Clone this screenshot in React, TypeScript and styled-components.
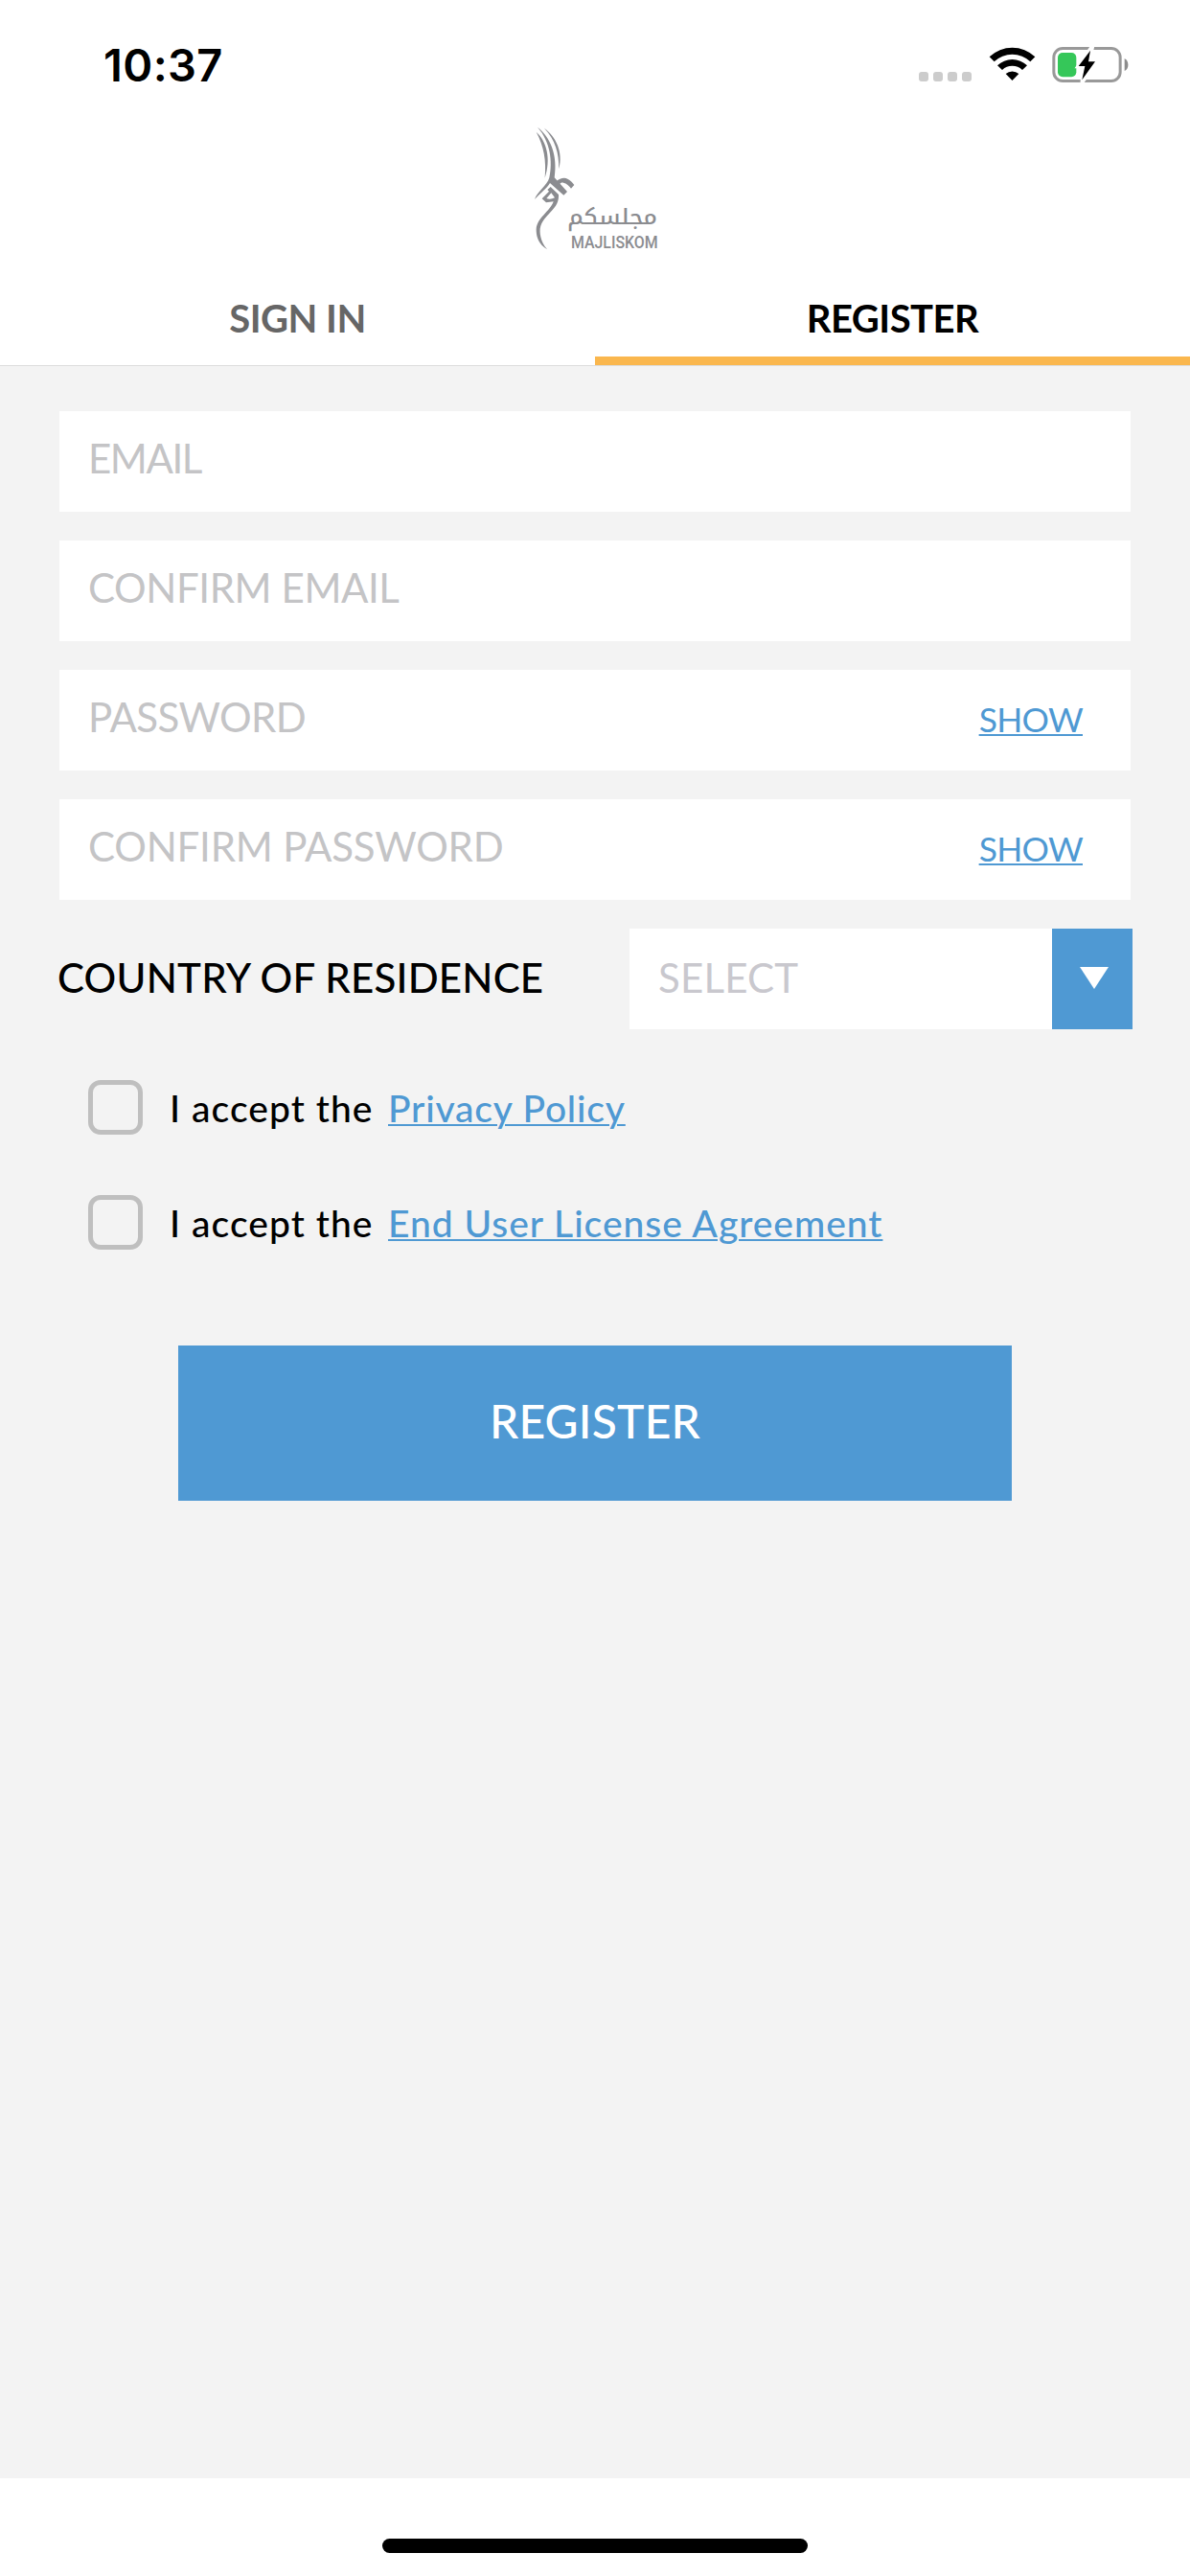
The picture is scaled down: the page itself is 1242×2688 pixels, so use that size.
import React, { useState } from 'react';
import styled, { createGlobalStyle } from 'styled-components';

const blue = '#4f99d3';
const surface = '#f3f3f3';

const GlobalStyle = createGlobalStyle`
  * { box-sizing: border-box; }
  body { margin: 0; background: #fff; font-family: Lato, "Liberation Sans", sans-serif; }
  button, input { font: inherit; border: 0; border-radius: 0; padding: 0; margin: 0; background: none; }
`;

const Screen = styled.div`
  width: 1242px;
  height: 2688px;
  display: flex;
  flex-direction: column;
  background: #fff;
  overflow: hidden;
`;

const StatusBar = styled.header`
  height: 120px;
  flex: none;
  display: flex;
  justify-content: space-between;
  padding: 0 64px 0 108px;
`;

const Clock = styled.time`
  font: 600 47px/60px Inter, sans-serif;
  letter-spacing: 0.4px;
  margin-top: 38px;
`;

const StatusIcons = styled.div`
  display: flex;
  align-items: flex-start;
  padding-top: 48px;
`;

const Signal = styled.div`
  display: flex;
  gap: 5px;
  margin: 27px 18px 0 0;
`;

const SignalDot = styled.i`
  width: 10px;
  height: 10px;
  border-radius: 3px;
  background: #ccc;
`;

const WifiIcon = styled.svg`
  width: 49px;
  height: 38px;
  margin-right: 17px;
`;

const BatteryIcon = styled.svg`
  width: 80px;
  height: 38px;
`;

const Brand = styled.div`
  height: 150px;
  flex: none;
  padding-left: 520px;
`;

const BrandMark = styled.svg`
  display: block;
  width: 200px;
  height: 150px;
`;

const Tabs = styled.nav`
  display: grid;
  grid-template-columns: 1fr 1fr;
  height: 112px;
  flex: none;
  border-bottom: 1px solid #dcdcdc;
`;

const Tab = styled.button<{ $active?: boolean }>`
  font-size: 40px;
  font-weight: 700;
  line-height: 48px;
  letter-spacing: -0.5px;
  color: ${(p) => (p.$active ? '#000' : '#666')};
  padding: ${(p) => (p.$active ? '22px 0 0' : '13px 0 0')};
  border-bottom: ${(p) => (p.$active ? '9px solid #fab74e' : '0')};
`;

const Form = styled.form`
  flex: 1;
  display: flex;
  flex-direction: column;
  gap: 30px;
  padding: 47px 60px 0 62px;
  background: ${surface};
`;

const Field = styled.div`
  width: 1118px;
  height: 105px;
  flex: none;
  display: flex;
  align-items: center;
  padding: 0 50px 0 30px;
  background: #fff;
`;

const FieldInput = styled.input<{ $tracking: number }>`
  flex: 1;
  min-width: 0;
  height: 105px;
  font-size: 42px;
  padding: 0 0 8px;
  outline: 0;
  letter-spacing: ${(p) => p.$tracking}px;
  &::placeholder { color: #c4c4c6; opacity: 1; }
`;

const ShowButton = styled.button`
  font-size: 35.5px;
  line-height: 44px;
  letter-spacing: -0.7px;
  color: ${blue};
  padding-bottom: 2px;
  text-decoration: underline;
  text-decoration-thickness: 2px;
  text-underline-offset: 2px;
`;

const CountryRow = styled.div`
  height: 105px;
  flex: none;
  display: flex;
  align-items: center;
  justify-content: space-between;
`;

const CountryLabel = styled.label`
  font-size: 42px;
  font-weight: 500;
  line-height: 50px;
  letter-spacing: 0.22px;
  padding-bottom: 4px;
  margin-left: -2px;
`;

const Select = styled.button`
  width: 525px;
  height: 105px;
  display: flex;
  background: #fff;
`;

const SelectText = styled.span`
  flex: 1;
  text-align: left;
  padding: 26px 0 0 30px;
  font-size: 42px;
  font-weight: 400;
  line-height: 50px;
  letter-spacing: 0.2px;
  color: #c9c8ce;
`;

const SelectArrow = styled.span`
  width: 84px;
  height: 105px;
  display: flex;
  background: ${blue};
  svg { width: 31px; height: 23px; margin: 40px 0 0 29px; }
`;

const Agreements = styled.div`
  display: flex;
  flex-direction: column;
  gap: 63px;
  padding: 23px 0 0 30px;
`;

const Agreement = styled.div`
  height: 57px;
  display: flex;
  align-items: center;
  font-size: 39px;
  line-height: 57px;
`;

const Checkbox = styled.button`
  width: 57px;
  height: 57px;
  margin-right: 28px;
  border: 5px solid #bfbfbf;
  border-radius: 13px;
`;

const AgreementText = styled.span`
  width: 228px;
  padding-top: 2px;
  font-weight: 500;
  letter-spacing: 1.05px;
`;

const AgreementLink = styled.a<{ $tracking: number }>`
  padding-top: 2px;
  font-weight: 500;
  color: ${blue};
  letter-spacing: ${(p) => p.$tracking}px;
  text-decoration: underline;
  text-decoration-thickness: 2px;
  text-underline-offset: 2px;
`;

const SubmitButton = styled.button`
  width: 870px;
  height: 162px;
  margin: 70px 0 0 124px;
  padding-bottom: 6px;
  font-size: 48px;
  font-weight: 500;
  letter-spacing: 0.2px;
  color: #fff;
  background: ${blue};
`;

const HomeArea = styled.footer`
  height: 102px;
  flex: none;
  display: flex;
  justify-content: center;
  padding-top: 63px;
`;

const HomeIndicator = styled.div`
  width: 444px;
  height: 15px;
  border-radius: 8px;
  background: #000;
`;

function Wifi() {
  return (
    <WifiIcon viewBox="0 0 147 114">
      <path d="M2 34A103 103 0 0 1 145 34L130 49A82 82 0 0 0 17 49Z" />
      <path d="M27 61A67 67 0 0 1 120 61L105 75A46 46 0 0 0 42 75Z" />
      <path d="M53 87A31 31 0 0 1 94 87L73.500 108Z" />
    </WifiIcon>
  );
}

function Battery() {
  return (
    <BatteryIcon viewBox="0 0 240 114">
      <rect x="5.500" y="7.500" width="208" height="102" rx="28" fill="none" stroke="#999" strokeWidth="9" />
      <path d="M227 39C242 47 242 71 227 78Z" fill="#8c8c8c" />
      <rect x="18" y="21" width="58" height="76" rx="15" fill="#35c759" />
      <path d="M124 4L82 64H104L94 114L139 48H116L126 4Z" fill="#fff" stroke="#fff" strokeWidth="12" />
      <path d="M120 14L83 63H103L94 106L135 49H114Z" />
    </BatteryIcon>
  );
}

function Logo() {
  return (
    <BrandMark viewBox="0 0 600 450" fill="#8b8c90">
      <path d="M119 53C152 82 166 138 146 197C151 142 143 98 119 53Z" />
      <path d="M123 38C163 69 187 125 176 196L216 240L205 251L162 213C150 232 137 239 114 264C122 240 153 222 160 196C171 145 163 83 123 38Z" />
      <path d="M144 41C181 68 204 116 190 169C190 118 179 79 144 41Z" />
      <path d="M182 208C192 198 207 195 217 200C226 204 233 212 238 219L228 230C222 222 214 213 204 212C198 211 195 213 192 217Z" />
      <path fillRule="evenodd" d="M164 225L189 249C193 306 117 315 133 382C137 399 144 410 153 420C129 406 119 386 119 358C121 321 162 303 173 271L150 274L137 262L159 239L154 234ZM166 244L151 261C158 264 168 264 177 259Z" />
      <text x="217" y="341" fontFamily="Noto Kufi Arabic, DejaVu Sans, sans-serif" fontWeight="500" fontSize="67" textLength="281" lengthAdjust="spacingAndGlyphs">مجلسكم</text>
      <text x="228" y="416" fontFamily="Roboto, sans-serif" fontWeight="500" fontSize="53" textLength="272" lengthAdjust="spacingAndGlyphs">MAJLISKOM</text>
    </BrandMark>
  );
}

function PasswordField({ label, tracking }: { label: string; tracking: number }) {
  const [visible, setVisible] = useState(false);
  return (
    <Field>
      <FieldInput type={visible ? 'text' : 'password'} placeholder={label} $tracking={tracking} />
      <ShowButton type="button" onClick={() => setVisible(!visible)}>SHOW</ShowButton>
    </Field>
  );
}

function Consent({ children, tracking }: { children: React.ReactNode; tracking: number }) {
  return (
    <Agreement>
      <Checkbox type="button" role="checkbox" aria-checked="false" />
      <AgreementText>I accept the</AgreementText>
      <AgreementLink $tracking={tracking}>{children}</AgreementLink>
    </Agreement>
  );
}

export default function App() {
  return (
    <Screen>
      <GlobalStyle />
      <StatusBar>
        <Clock>10:37</Clock>
        <StatusIcons>
          <Signal><SignalDot /><SignalDot /><SignalDot /><SignalDot /></Signal>
          <Wifi />
          <Battery />
        </StatusIcons>
      </StatusBar>
      <Brand><Logo /></Brand>
      <Tabs>
        <Tab>SIGN IN</Tab>
        <Tab $active>REGISTER</Tab>
      </Tabs>
      <Form onSubmit={(e) => e.preventDefault()}>
        <Field><FieldInput placeholder="EMAIL" $tracking={-1.4} /></Field>
        <Field><FieldInput placeholder="CONFIRM EMAIL" $tracking={-0.4} /></Field>
        <PasswordField label="PASSWORD" tracking={-0.6} />
        <PasswordField label="CONFIRM PASSWORD" tracking={-0.2} />
        <CountryRow>
          <CountryLabel>COUNTRY OF RESIDENCE</CountryLabel>
          <Select type="button">
            <SelectText>SELECT</SelectText>
            <SelectArrow>
              <svg viewBox="0 0 31 23"><path d="M0 0H30L15 23Z" fill="#fff" /></svg>
            </SelectArrow>
          </Select>
        </CountryRow>
        <Agreements>
          <Consent tracking={0.8}>Privacy Policy</Consent>
          <Consent tracking={0.97}>End User License Agreement</Consent>
        </Agreements>
        <SubmitButton>REGISTER</SubmitButton>
      </Form>
      <HomeArea><HomeIndicator /></HomeArea>
    </Screen>
  );
}
